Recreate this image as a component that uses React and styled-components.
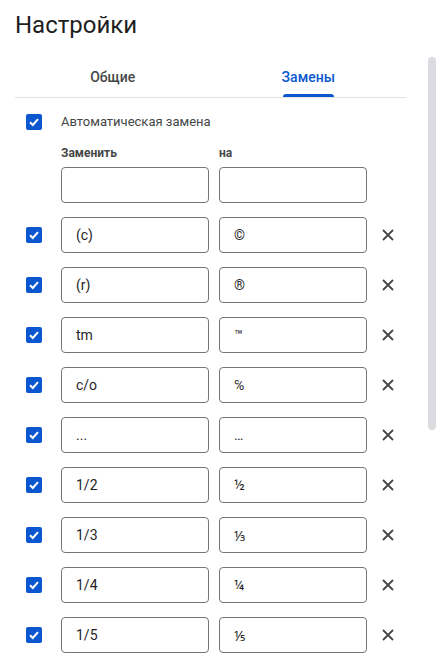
import styled, { createGlobalStyle } from "styled-components";

const GlobalStyle = createGlobalStyle`
  html, body {
    margin: 0;
    padding: 0;
    background: #fff;
    overflow: hidden;
  }
  * {
    box-sizing: border-box;
  }
`;

const Page = styled.div`
  width: 436px;
  height: 658px;
  display: flex;
  overflow: hidden;
  font-family: Roboto, "Noto Sans", Arial, sans-serif;
  color: #1f1f1f;
`;

const Main = styled.div`
  flex: 1;
  min-width: 0;
  display: flex;
  flex-direction: column;
`;

const Title = styled.h1`
  margin: 0;
  padding: 9px 15px 0;
  height: 57px;
  flex: none;
  font-size: 24px;
  line-height: 32px;
  font-weight: 400;
  color: #1f1f1f;
`;

const Content = styled.div`
  flex: 1;
  overflow: hidden;
`;

const ScrollTrack = styled.div`
  width: 8px;
  flex: none;
  padding-top: 57px;
`;

const Thumb = styled.div`
  height: 373px;
  border-radius: 4px;
  background: #dadce0;
`;

const Tabs = styled.div`
  display: flex;
  height: 41px;
  margin: 0 22px 0 15px;
  border-bottom: 1px solid #e3e3e3;
`;

const Tab = styled.div`
  flex: 1;
  display: flex;
  justify-content: center;

  span {
    position: relative;
    display: flex;
    align-items: center;
    height: 100%;
    font-size: 14px;
    font-weight: 500;
    color: ${(p) => (p.$active ? "#0b57d0" : "#444746")};
  }

  span::after {
    content: "";
    display: ${(p) => (p.$active ? "block" : "none")};
    position: absolute;
    left: 1px;
    right: 1px;
    bottom: 0;
    height: 3px;
    border-radius: 3px 3px 0 0;
    background: #0b57d0;
  }
`;

const AutoRow = styled.label`
  display: flex;
  align-items: center;
  gap: 19px;
  padding: 16px 0 0 26px;
  font-size: 13px;
  line-height: 16px;
  color: #444746;
`;

const Box = styled.span`
  width: 16px;
  height: 16px;
  flex: none;
  border-radius: 2px;
  background: #0b57d0;
  display: flex;
  align-items: center;
  justify-content: center;
`;

const HeaderRow = styled.div`
  display: flex;
  gap: 10px;
  padding: 15px 0 0 61px;

  span {
    width: 148px;
    font-size: 12px;
    line-height: 16px;
    font-weight: 700;
    color: #444746;
  }
`;

const List = styled.div`
  display: flex;
  flex-direction: column;
  gap: 14px;
  padding-top: 6px;
`;

const Row = styled.div`
  display: flex;
  align-items: center;
  height: 36px;
  padding-left: ${(p) => (p.$empty ? "61px" : "26px")};
`;

const Inputs = styled.div`
  display: flex;
  gap: 10px;
  margin-left: ${(p) => (p.$empty ? "0" : "19px")};
`;

const Field = styled.input`
  width: 148px;
  height: 36px;
  padding: 0 14px;
  border: 1px solid #747775;
  border-radius: 4px;
  font-family: Roboto, "Noto Sans", Arial, sans-serif;
  font-size: 14px;
  color: #1f1f1f;
  background: #fff;
  outline: none;
`;

const Remove = styled.button`
  width: 24px;
  height: 24px;
  margin-left: 9px;
  padding: 0;
  border: none;
  background: none;
  display: flex;
  align-items: center;
  justify-content: center;
  cursor: pointer;
`;

const Check = () => (
  <Box>
    <svg width="12" height="12" viewBox="0 0 12 12">
      <path d="M2 6.3 L4.8 9 L10 3.2" fill="none" stroke="#fff" strokeWidth="2" />
    </svg>
  </Box>
);

const Cross = () => (
  <svg width="12" height="12" viewBox="0 0 12 12">
    <path d="M1 1 L11 11 M11 1 L1 11" stroke="#444746" strokeWidth="1.8" />
  </svg>
);

const rules = [
  ["(c)", "©"],
  ["(r)", "®"],
  ["tm", "™"],
  ["c/o", "℅"],
  ["...", "…"],
  ["1/2", "½"],
  ["1/3", "⅓"],
  ["1/4", "¼"],
  ["1/5", "⅕"],
  ["1/6", "⅙"],
];

const App = () => {
  return (
    <Page>
      <GlobalStyle />
      <Main>
        <Title>Настройки</Title>
        <Content>
          <Tabs>
            <Tab>
              <span>Общие</span>
            </Tab>
            <Tab $active>
              <span>Замены</span>
            </Tab>
          </Tabs>
          <AutoRow>
            <Check />
            Автоматическая замена
          </AutoRow>
          <HeaderRow>
            <span>Заменить</span>
            <span>на</span>
          </HeaderRow>
          <List>
            <Row $empty>
              <Inputs $empty>
                <Field defaultValue="" />
                <Field defaultValue="" />
              </Inputs>
            </Row>
            {rules.map(([from, to]) => (
              <Row key={from}>
                <Check />
                <Inputs>
                  <Field defaultValue={from} />
                  <Field defaultValue={to} />
                </Inputs>
                <Remove>
                  <Cross />
                </Remove>
              </Row>
            ))}
          </List>
        </Content>
      </Main>
      <ScrollTrack>
        <Thumb />
      </ScrollTrack>
    </Page>
  );
};

export default App;
